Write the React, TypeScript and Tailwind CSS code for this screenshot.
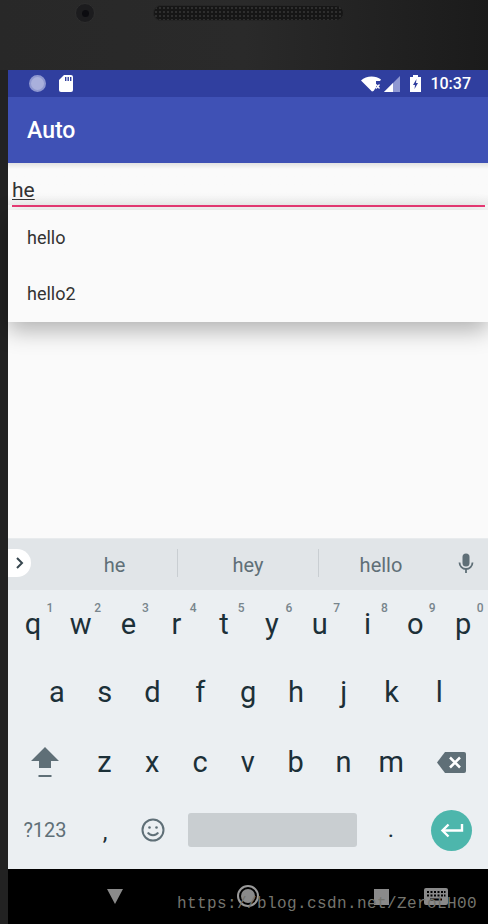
const row1 = [
  ["q", "1"],
  ["w", "2"],
  ["e", "3"],
  ["r", "4"],
  ["t", "5"],
  ["y", "6"],
  ["u", "7"],
  ["i", "8"],
  ["o", "9"],
  ["p", "0"],
];
const row2 = ["a", "s", "d", "f", "g", "h", "j", "k", "l"];
const row3 = ["z", "x", "c", "v", "b", "n", "m"];

function Letter({ label }: { label: string }) {
  return (
    <div className="w-[47.8px] h-full flex items-center justify-center text-[29px] leading-none text-[#1c3038]">
      {label}
    </div>
  );
}

export default function App() {
  return (
    <div className="w-[488px] h-[924px] overflow-hidden flex flex-col bg-black font-['Roboto',sans-serif]">
      {/* bezel */}
      <div className="h-[70px] shrink-0 bg-gradient-to-r from-[#282828] via-[#2a2a2a] to-[#1b1b1b] flex items-start pt-[3px] pl-[75px] gap-[58px]">
        <div className="w-5 h-5 rounded-full bg-[#1c1c1e] border border-[#2e2e2e] flex items-center justify-center">
          <div className="w-[7px] h-[7px] rounded-full bg-[#0c0c10]" />
        </div>
        <div className="w-[191px] h-4 mt-[2px] rounded-lg border border-[#252525] bg-[#161616] bg-[radial-gradient(#2e2e2e_1px,transparent_1px)] bg-[length:4px_4px]" />
      </div>

      <div className="flex-1 flex min-h-0">
        <div className="w-2 shrink-0 bg-[#222222]" />
        <div className="flex-1 flex flex-col min-w-0">
          {/* status bar */}
          <div className="h-[27px] shrink-0 bg-[#303f9f] flex items-center pl-[21px] pr-[17px] text-white">
            <div className="w-[17px] h-[17px] rounded-full bg-[#a9b0dc] border-2 border-[#8e97d0]" />
            <svg width="14" height="17" viewBox="0 0 14 17" className="ml-[13px]">
              <path
                d="M5 0h7a2 2 0 0 1 2 2v13a2 2 0 0 1-2 2H2a2 2 0 0 1-2-2V5z"
                fill="#fff"
              />
              <path d="M6 2h1.4v4H6zM8.5 2h1.4v4H8.5zM11 2h1.4v4H11z" fill="#303f9f" />
            </svg>
            <svg width="20" height="16" viewBox="0 0 20 16" className="ml-auto">
              <path d="M0 4.500C5-.8 15-.8 20 3.500L19 5h-4v6.500l-2.500 3.500-1.500 0.500z" fill="#fff" />
              <path d="M15 8.500l3.500 4M18.500 8.500l-3.500 4" stroke="#fff" strokeWidth="1.300" />
            </svg>
            <svg width="16" height="16" viewBox="0 0 16 16" className="ml-[3px]">
              <path d="M16 0v16H0z" fill="#8f98d2" />
              <path d="M9 7v9H0z" fill="#fff" />
            </svg>
            <svg width="11" height="17" viewBox="0 0 11 17" className="ml-[10px]">
              <path d="M3 0h5v2h3v15H0V2h3z" fill="#fff" />
              <path d="M6.500 4L3 10h2l-.5 4L8 8H6z" fill="#303f9f" />
            </svg>
            <span className="ml-[9px] text-[16px] font-medium leading-none">10:37</span>
          </div>

          {/* app bar */}
          <div className="h-[66px] shrink-0 bg-[#3f51b5] flex items-center pl-[19px] pt-[3px] text-white text-[23px] font-medium">
            Auto
          </div>

          {/* content */}
          <div className="relative flex-1 min-h-0 bg-[#fafafa]">
            <div className="h-[6px] bg-gradient-to-b from-[#e2e2e2] to-[#fafafa]" />
            <div className="pl-1 h-[36px] flex flex-col bg-gradient-to-b from-[#fafafa] from-70% to-[#efefef]">
              <span className="text-[21px] leading-[28px] text-[#333333] underline underline-offset-2 decoration-1 mt-[7px]">
                he
              </span>
            </div>
            <div className="ml-1 mr-[3px] h-[2px] bg-[#ec3a76]" />

            {/* dropdown */}
            <div className="absolute left-0 right-0 top-[47px] bg-[#fafafa] shadow-[0_8px_22px_rgba(0,0,0,0.3)]">
              <div className="h-[56px] pb-[2px] flex items-center pl-[19px] text-[18px] text-[#333333]">hello</div>
              <div className="h-[56px] pb-[2px] flex items-center pl-[19px] text-[18px] text-[#333333]">hello2</div>
            </div>
          </div>

          {/* suggestions */}
          <div className="h-[52px] shrink-0 bg-[#e1e5e8] border-t border-[#e8ebed] flex items-center text-[#5f6f77] text-[20px]">
            <div className="w-[23px] h-7 -mt-[3px] bg-white rounded-r-full flex items-center justify-center">
              <svg width="10" height="14" viewBox="0 0 10 14">
                <path d="M2 2l5 5-5 5" fill="none" stroke="#37474f" strokeWidth="2" />
              </svg>
            </div>
            <div className="w-[147px] h-7 border-r border-[#c9ced2] flex items-center justify-center pl-[21px] -mt-[3px]">
              <span className="mt-[4px]">he</span>
            </div>
            <div className="w-[141px] h-7 border-r border-[#c9ced2] flex items-center justify-center -mt-[3px]">
              <span className="mt-[4px]">hey</span>
            </div>
            <div className="w-[124px] h-7 flex items-center justify-center -mt-[3px]">
              <span className="mt-[4px]">hello</span>
            </div>
            <svg width="16" height="22" viewBox="0 0 16 22" className="ml-[15px] -mt-[2px]">
              <rect x="4.500" y="0.500" width="7" height="13" rx="3.500" fill="#5f6f77" />
              <path d="M1.500 9.500a6.500 6.500 0 0 0 13 0" fill="none" stroke="#5f6f77" strokeWidth="1.800" />
              <path d="M8 16v4" stroke="#5f6f77" strokeWidth="1.800" />
            </svg>
          </div>

          {/* keyboard */}
          <div className="h-[279px] shrink-0 bg-[#ebeff2] flex flex-col">
            <div className="h-[70px] flex pl-px">
              {row1.map(([k, n]) => (
                <div key={k} className="relative w-[47.8px] h-full flex items-center justify-center pb-[1px] text-[29px] leading-none text-[#1c3038]">
                  {k}
                  <span className="absolute top-[12px] right-[3.5px] text-[12px] font-medium text-[#78858c]">{n}</span>
                </div>
              ))}
            </div>
            <div className="h-[69px] flex pl-[25px] pb-[4px]">
              {row2.map((k) => (
                <Letter key={k} label={k} />
              ))}
            </div>
            <div className="h-[68px] flex items-center pb-[2px]">
              <div className="w-[72.500px] flex justify-center pl-[2px]">
                <svg width="28" height="32" viewBox="0 0 28 32">
                  <path d="M14 1L28 15H20V22H8V15H0z" fill="#5f6f77" />
                  <rect x="7.500" y="29" width="13" height="2" fill="#5f6f77" />
                </svg>
              </div>
              {row3.map((k) => (
                <Letter key={k} label={k} />
              ))}
              <div className="flex-1 flex justify-center">
                <svg width="29" height="21" viewBox="0 0 29 21">
                  <path d="M8 0h19a2 2 0 0 1 2 2v17a2 2 0 0 1-2 2H8L0 10.500z" fill="#5f6f77" />
                  <path d="M13 5.500l10 10M23 5.500l-10 10" stroke="#fff" strokeWidth="2.500" />
                </svg>
              </div>
            </div>
            <div className="h-[72px] pb-[6px] flex items-center text-[#5f6f77]">
              <div className="w-[72px] text-center text-[20px] pl-[2px]">?123</div>
              <div className="w-12 text-center text-[24px] text-[#1c3038] pl-[2px] mt-[4px]">,</div>
              <div className="w-[48px] flex justify-center pl-[2px]">
                <svg width="24" height="24" viewBox="0 0 24 24" fill="none" stroke="#5f6f77" strokeWidth="2">
                  <circle cx="12" cy="12" r="10.500" />
                  <circle cx="8.500" cy="9.500" r="1.300" fill="#5f6f77" stroke="none" />
                  <circle cx="15.500" cy="9.500" r="1.300" fill="#5f6f77" stroke="none" />
                  <path d="M6.800 14.500c2 3.500 8.400 3.500 10.400 0" />
                </svg>
              </div>
              <div className="ml-[12px] w-[169px] h-[34px] rounded-[3px] bg-[#c9ced1]" />
              <div className="w-[74px] pr-[6px] text-center text-[24px] text-[#1c3038] -mt-[2px]">.</div>
              <div className="w-[41px] h-[41px] rounded-full bg-[#4db6ac] flex items-center justify-center">
                <svg width="24" height="16" viewBox="0 0 24 16" fill="none" stroke="#fff" strokeWidth="2.400">
                  <path d="M22 2v6.500H3" />
                  <path d="M8.500 2.500L2.500 8.500l6 6" />
                </svg>
              </div>
            </div>
          </div>

          {/* nav bar */}
          <div className="relative h-[55px] shrink-0 bg-black flex items-start pt-[20px]">
            <svg width="16" height="15" viewBox="0 0 16 15" className="ml-[99px]">
              <path d="M0 0h16L8 15z" fill="#8a8a8a" />
            </svg>
            <div className="ml-[114px] -mt-[4px] w-[22px] h-[22px] rounded-full border-2 border-[#9a9a9a] flex items-center justify-center">
              <div className="w-[14px] h-[14px] rounded-full bg-[#8a8a8a]" />
            </div>
            <div className="ml-[115px] w-[15px] h-[16px] bg-[#8a8a8a]" />
            <svg width="24" height="17" viewBox="0 0 24 17" className="ml-[35px] -mt-[1px]">
              <rect width="24" height="17" rx="2" fill="#8a8a8a" />
              <path
                d="M3 3h2v2H3zM6.500 3h2v2h-2zM10 3h2v2h-2zM13.500 3h2v2h-2zM17 3h2v2h-2zM20 3h1.500v2H20zM3 6.500h2v2H3zM6.500 6.500h2v2h-2zM10 6.500h2v2h-2zM13.500 6.500h2v2h-2zM17 6.500h2v2h-2zM20 6.500h1.500v2H20zM6 10.500h12v2H6z"
                fill="#000"
              />
            </svg>
            <span className="absolute left-[169px] top-[23px] font-['Liberation_Mono',monospace] text-[16px] leading-[24px] tracking-[0.4px] text-[#74746e] whitespace-nowrap">
              https://blog.csdn.net/ZeroLH00
            </span>
          </div>
        </div>
      </div>
    </div>
  );
}
